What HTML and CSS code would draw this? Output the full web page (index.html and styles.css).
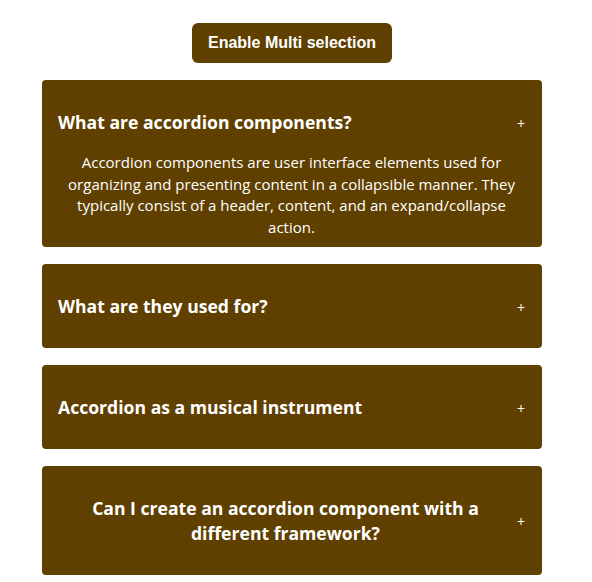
FILE: index.html
```html
<!DOCTYPE html>
<html>
<head>
<meta charset="utf-8">
<link rel="stylesheet" href="styles.css">
</head>
<body>
<div class="wrapper">
  <button class="multi-btn">Enable Multi selection</button>
  <div class="item open">
    <div class="head">
      <h3 class="title">What are accordion components?</h3>
      <span class="icon">+</span>
    </div>
    <div class="content">Accordion components are user interface elements used for organizing and presenting content in a collapsible manner. They typically consist of a header, content, and an expand/collapse action.</div>
  </div>
  <div class="item">
    <div class="head">
      <h3 class="title">What are they used for?</h3>
      <span class="icon">+</span>
    </div>
  </div>
  <div class="item">
    <div class="head">
      <h3 class="title">Accordion as a musical instrument</h3>
      <span class="icon">+</span>
    </div>
  </div>
  <div class="item">
    <div class="head">
      <h3 class="title">Can I create an accordion component with a different framework?</h3>
      <span class="icon">+</span>
    </div>
  </div>
</div>
</body>
</html>
```

FILE: styles.css
```css
body {
  margin: 0;
  font-family: "Open Sans", "Noto Sans", sans-serif;
  background: #ffffff;
}
.wrapper {
  width: 500px;
  margin-left: 42px;
  padding-top: 23px;
  display: flex;
  flex-direction: column;
  align-items: center;
  gap: 17px;
}
.multi-btn {
  font-family: "Liberation Sans", Arial, sans-serif;
  font-weight: bold;
  font-size: 16px;
  color: #ffffff;
  background: #604000;
  border: none;
  border-radius: 6px;
  padding: 11px 16px;
  line-height: 18px;
}
.item {
  width: 100%;
  box-sizing: border-box;
  background: #604000;
  border-radius: 4px;
  color: #ffffff;
  padding: 0 17px 0 16px;
}
.head {
  display: flex;
  justify-content: space-between;
  align-items: center;
  padding: 30px 0 29px 0;
}
.item.open .head {
  padding-bottom: 17px;
}
.title {
  margin: 0;
  font-size: 17.6px;
  font-weight: 700;
  line-height: 25px;
  text-align: center;
}
.icon {
  font-size: 14px;
  line-height: 16px;
  margin-left: 4px;
  margin-top: 2px;
  flex-shrink: 0;
}
.content {
  text-align: center;
  font-size: 15px;
  line-height: 21.5px;
  padding: 0 8px 9px 8px;
}
```
